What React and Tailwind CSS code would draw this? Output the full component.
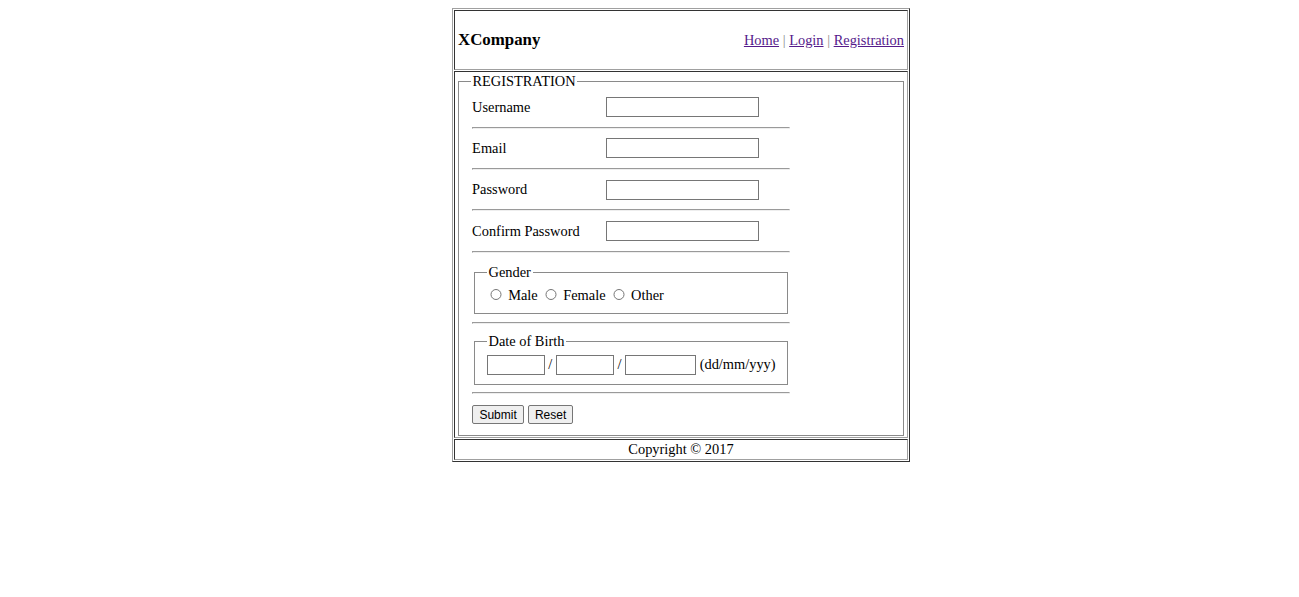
export default function App() {
  const rows = ["Username", "Email", "Password", "Confirm Password"];
  const outset = "border border-t-[#a0a0a0] border-l-[#a0a0a0] border-b-[#333333] border-r-[#333333]";
  const inset = "border border-t-[#333333] border-l-[#333333] border-b-[#a0a0a0] border-r-[#a0a0a0]";
  const hr = "my-[7.2px] h-[2px] border border-t-[#9a9a9a] border-l-[#9a9a9a] border-b-[#eeeeee] border-r-[#eeeeee]";
  const textInput = "h-[20px] border border-[#767676] bg-white px-[2px] font-['Liberation_Sans',Arial,sans-serif] text-[12px] outline-none";
  const radio = "mr-[2.7px] mt-[2.7px] h-[11.7px] w-[11.7px] align-baseline";
  const btn = "h-[19px] rounded-[2px] border border-[#767676] bg-[#efefef] font-['Liberation_Sans',Arial,sans-serif] text-[12px] leading-none text-black";

  return (
    <div className="min-h-screen bg-white font-['Liberation_Serif','Times_New_Roman',serif] text-[14.4px] leading-[normal] text-black">
      <div className="pl-[452px] pt-[8px]">
        <div className={`flex w-[458px] flex-col gap-[1px] p-[1px] ${outset}`}>
          {/* header */}
          <div className={`flex h-[60px] items-center justify-between pl-[3px] pr-[3px] ${inset}`}>
            <h3 className="text-[16.85px] font-bold">XCompany</h3>
            <div>
              <a href="#" className="text-[#551a8b] underline">Home</a>{" "}
              <span className="text-[#8c8c8c]">|</span>{" "}
              <a href="#" className="text-[#551a8b] underline">Login</a>{" "}
              <span className="text-[#8c8c8c]">|</span>{" "}
              <a href="#" className="text-[#551a8b] underline">Registration</a>
            </div>
          </div>

          {/* body */}
          <div className={`flex h-[367px] flex-col p-[1px] ${inset}`}>
            <fieldset className="mx-[1.8px] min-w-0 flex-1 border border-[#8a8a8a] px-[11.8px] pb-[9px] pt-[4.5px]">
              <legend className="px-[1.8px]">REGISTRATION</legend>
              <div className="ml-[1.5px] flex w-[318px] flex-col">
                {rows.map((r) => (
                  <div key={r}>
                    <div className="flex h-[25px] items-center">
                      <span className="w-[134px]">{r}</span>
                      <input
                        type={r.includes("Password") ? "password" : "text"}
                        className={`${textInput} w-[153px]`}
                      />
                    </div>
                    <div className={hr} />
                  </div>
                ))}

                <fieldset className="mx-[1.8px] mt-[4px] border border-[#8a8a8a] px-[11.8px] pb-[9px] pt-[5px]">
                  <legend className="px-[1.8px]">Gender</legend>
                  <div>
                    <input type="radio" name="gender" className={`${radio} ml-[3.5px]`} /> Male
                    <input type="radio" name="gender" className={`${radio} ml-[7.5px]`} /> Female
                    <input type="radio" name="gender" className={`${radio} ml-[7.5px]`} /> Other
                  </div>
                </fieldset>

                <div className={hr} />

                <fieldset className="mx-[1.8px] mt-[2px] border border-[#8a8a8a] px-[11.8px] pb-[9px] pt-[5px]">
                  <legend className="px-[1.8px]">Date of Birth</legend>
                  <div className="flex items-center">
                    <input type="text" className={`${textInput} w-[58px]`} />
                    <span className="px-[3.6px]">/</span>
                    <input type="text" className={`${textInput} w-[58px]`} />
                    <span className="px-[3.6px]">/</span>
                    <input type="text" className={`${textInput} w-[71px]`} />
                    <span className="pl-[3.6px]">(dd/mm/yyy)</span>
                  </div>
                </fieldset>

                <div className={hr} />

                <div className="mt-[4px] flex gap-[4px]">
                  <button type="button" className={`${btn} w-[52px]`}>Submit</button>
                  <button type="button" className={`${btn} w-[45px]`}>Reset</button>
                </div>
              </div>
            </fieldset>
          </div>

          {/* footer */}
          <div className={`flex h-[21px] items-center justify-center ${inset}`}>
            Copyright © 2017
          </div>
        </div>
      </div>
    </div>
  );
}
